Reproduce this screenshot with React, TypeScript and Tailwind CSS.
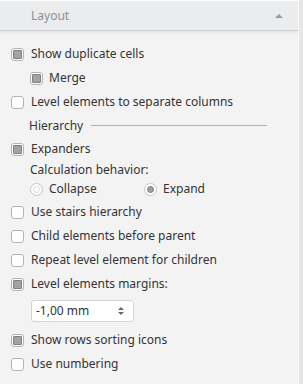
import React from "react";

type BoxProps = { checked?: boolean };

const CheckBox = ({ checked }: BoxProps) => (
  <span className="flex h-[13px] w-[13px] shrink-0 items-center justify-center rounded-[3px] border border-[#b4b4b4] bg-white">
    {checked && <span className="h-[9px] w-[9px] rounded-[1px] border border-[#808080] bg-[#a3a3a3]" />}
  </span>
);

const Radio = ({ checked }: BoxProps) => (
  <span className="flex h-[13px] w-[13px] shrink-0 items-center justify-center rounded-full border border-[#c4c4c4] bg-white">
    <span className={checked ? "h-[7px] w-[7px] rounded-full border border-[#7a7a7a] bg-[#a0a0a0]" : "h-[7px] w-[7px] rounded-full border border-[#dcdcdc] bg-white"} />
  </span>
);

const Row = ({ label, checked, indent }: { label: string; checked?: boolean; indent?: boolean }) => (
  <div className={indent ? "flex h-[24px] items-center gap-[6px] pl-[30px]" : "flex h-[24px] items-center gap-[7px] pl-[11px]"}>
    <CheckBox checked={checked} />
    <span>{label}</span>
  </div>
);

export default function App() {
  return (
    <div className="h-[384px] w-[303px] bg-[#e6e6e6] text-[12px] text-[#333] [font-family:'Noto_Sans',sans-serif]">
      <div className="h-full w-[299px] border-r border-white bg-[#f3f3f3]">
        <div className="flex h-[31px] items-center justify-between border-t border-white border-b border-b-[#c9cbce] bg-[#ebecee] pl-[31px] pr-[15px] pt-[1px] text-[#8c9096] shadow-[0_2px_2px_rgba(0,0,0,0.06)]">
          <span>Layout</span>
          <span className="h-0 w-0 border-x-[4px] border-b-[4px] border-x-transparent border-b-[#9a9a9a]" />
        </div>
        <div className="flex flex-col pt-[11px]">
          <Row label="Show duplicate cells" checked />
          <Row label="Merge" checked indent />
          <Row label="Level elements to separate columns" />
          <div className="flex h-[23px] items-center gap-[8px] pl-[29px] pr-[31px]">
            <span>Hierarchy</span>
            <span className="h-px flex-1 bg-[#b0b0b0]" />
          </div>
          <Row label="Expanders" checked />
          <div className="flex h-[17px] items-center pl-[30px]">Calculation behavior:</div>
          <div className="flex h-[22px] items-center pl-[30px]">
            <div className="flex w-[114px] items-center gap-[6px]">
              <Radio />
              <span>Collapse</span>
            </div>
            <div className="flex items-center gap-[6px]">
              <Radio checked />
              <span>Expand</span>
            </div>
          </div>
          <Row label="Use stairs hierarchy" />
          <Row label="Child elements before parent" />
          <Row label="Repeat level element for children" />
          <Row label="Level elements margins:" checked />
          <div className="flex h-[32px] items-start pl-[31px] pt-[4px]">
            <div className="flex h-[22px] w-[103px] items-center justify-between rounded-[3px] border border-[#d4d4d4] bg-white pl-[4px] pr-[9px]">
              <span>-1,00 mm</span>
              <span className="flex flex-col items-center gap-[2px]">
                <span className="h-0 w-0 border-x-[3px] border-b-[3px] border-x-transparent border-b-[#666]" />
                <span className="h-0 w-0 border-x-[3px] border-t-[3px] border-x-transparent border-t-[#666]" />
              </span>
            </div>
          </div>
          <Row label="Show rows sorting icons" checked />
          <Row label="Use numbering" />
        </div>
      </div>
    </div>
  );
}
